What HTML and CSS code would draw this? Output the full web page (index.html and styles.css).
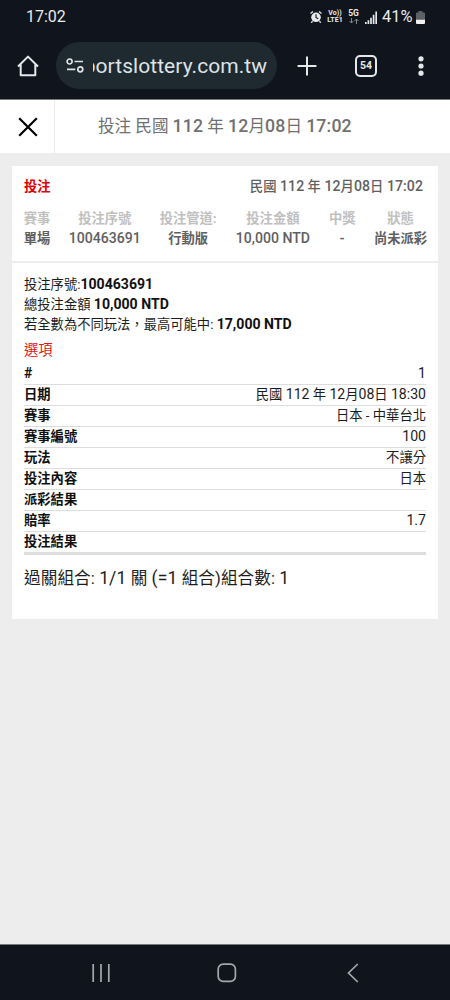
FILE: index.html
```html
<!DOCTYPE html>
<html lang="zh-Hant">
<head>
<meta charset="utf-8">
<meta name="viewport" content="width=device-width, initial-scale=1">
<title>投注</title>
<link rel="stylesheet" href="styles.css">
</head>
<body>
<div class="statusbar">
  <span class="clock">17:02</span>
  <div class="indicators">
    <svg class="alarm" viewBox="0 0 12 12" width="12" height="12"><circle cx="6" cy="6.3" r="4.8" fill="#e8eaeb"/><path d="M.5 2.6 3 .6M11.500 2.600 9 .6M2.600 10.200 1.200 11.700M9.400 10.200l1.400 1.500" stroke="#e8eaeb" stroke-width="1.300"/><path d="M6 3.300v3.200l2.200 1.200" fill="none" stroke="#10151d" stroke-width="1.100"/></svg>
    <span class="net volte"><span>Vo))</span><span>LTE1</span></span>
    <span class="net five"><span>5G</span><svg viewBox="0 0 10 6" width="10" height="6"><path d="M2.500 0v5M.5 3l2 2 2-2M7.500 6V1M5.500 3l2-2 2 2" fill="none" stroke="#858a90" stroke-width="1"/></svg></span>
    <svg class="signal" viewBox="0 0 12 13" width="12" height="13"><path d="M.8 13v-2M3.400 13V9.300M6 13V6.700M8.600 13V3.800M11.200 13V.5" stroke="#e8eaeb" stroke-width="1.700"/></svg>
    <span class="percent">41%</span>
    <svg class="battery" viewBox="0 0 9 13" width="9" height="13"><path d="M2.500 0h4v1.500H8Q9 1.500 9 2.500V8H0V2.500Q0 1.500 1 1.500h1.500z" fill="#5d6166"/><path d="M0 8.500h9V12q0 1-1 1H1q-1 0-1-1z" fill="#f1f1f1"/></svg>
  </div>
</div>
<div class="toolbar">
  <svg class="home" viewBox="0 0 22 22" width="22" height="22"><path d="M1 11.500 11 1.600 21 11.500M3.700 9.500V20.200H18.300V9.500" fill="none" stroke="#e5e7e9" stroke-width="2" stroke-linejoin="round"/></svg>
  <div class="address">
    <svg class="tune" viewBox="0 0 18 15" width="18" height="15"><g fill="none" stroke="#dfe3e6" stroke-width="1.700"><circle cx="3.600" cy="3.500" r="2.500"/><path d="M8.500 3.500H17M1 11.300H9.300"/><circle cx="14.300" cy="11.300" r="2.500"/></g></svg>
    <div class="url"><span>portslottery.com.tw</span></div>
  </div>
  <svg class="plus" viewBox="0 0 20 20" width="20" height="20"><path d="M10 .6v18.800M.6 10h18.800" stroke="#e5e7e9" stroke-width="2"/></svg>
  <span class="tabs">54</span>
  <svg class="more" viewBox="0 0 6 20" width="6" height="20"><g fill="#e5e7e9"><circle cx="3" cy="2.800" r="2.600"/><circle cx="3" cy="10" r="2.600"/><circle cx="3" cy="17.200" r="2.600"/></g></svg>
</div>
<header class="titlebar">
  <div class="close"><svg viewBox="0 0 20 20" width="20" height="20"><path d="M1.200 1.200l17.600 17.600M18.800 1.200 1.200 18.800" stroke="#000" stroke-width="2.200"/></svg></div>
  <h1 class="title">投注 民國 <b>112</b> 年 <b>12</b>月<b>08</b>日 <b>17:02</b></h1>
</header>
<main class="content">
  <section class="card">
    <div class="head">
      <div class="headline"><span class="kind">投注</span><span class="when">民國 <i>112</i> 年 <i>12</i>月<i>08</i>日 <i>17:02</i></span></div>
      <div class="summary">
        <div><span class="label">賽事</span><span>單場</span></div>
        <div><span class="label">投注序號</span><span class="num">100463691</span></div>
        <div><span class="label">投注管道:</span><span>行動版</span></div>
        <div><span class="label">投注金額</span><span class="num">10,000 NTD</span></div>
        <div><span class="label">中獎</span><span>-</span></div>
        <div><span class="label">狀態</span><span>尚未派彩</span></div>
      </div>
    </div>
    <div class="detail">
      <p>投注序號:<b>100463691</b></p>
      <p>總投注金額 <b>10,000 NTD</b></p>
      <p>若全數為不同玩法，最高可能中: <b>17,000 NTD</b></p>
      <h2 class="options">選項</h2>
      <dl class="rows">
        <div><dt><i>#</i></dt><dd><i>1</i></dd></div>
        <div><dt>日期</dt><dd>民國 <i>112</i> 年 <i>12</i>月<i>08</i>日 <i>18:30</i></dd></div>
        <div><dt>賽事</dt><dd>日本 - 中華台北</dd></div>
        <div><dt>賽事編號</dt><dd><i>100</i></dd></div>
        <div><dt>玩法</dt><dd>不讓分</dd></div>
        <div><dt>投注內容</dt><dd>日本</dd></div>
        <div><dt>派彩結果</dt><dd></dd></div>
        <div><dt>賠率</dt><dd><i>1.7</i></dd></div>
        <div><dt>投注結果</dt><dd></dd></div>
      </dl>
      <p class="combo">過關組合: <i>1/1</i> 關 <i>(=1</i> 組合)組合數: <i>1</i></p>
    </div>
  </section>
</main>
<nav class="navbar">
  <svg viewBox="0 0 18 20" width="18" height="20"><path d="M1.200 1v18M9 1v18M16.800 1v18" stroke="#a5a8ab" stroke-width="1.700"/></svg>
  <svg class="navhome" viewBox="0 0 20 20" width="20" height="20"><rect x="1.200" y="1.200" width="17.200" height="17.200" rx="5" fill="none" stroke="#a5a8ab" stroke-width="1.700"/></svg>
  <svg viewBox="0 0 12 20" width="12" height="20"><path d="M10.800 1 1.500 10l9.300 9" fill="none" stroke="#a5a8ab" stroke-width="1.700"/></svg>
</nav>
</body>
</html>
```
FILE: styles.css
```css
* { box-sizing: border-box; }
body {
  margin: 0;
  width: 450px;
  height: 1000px;
  display: flex;
  flex-direction: column;
  overflow: hidden;
  background: #ededed;
  font-family: Roboto, "Noto Sans CJK TC", sans-serif;
  font-size: 13.3px;
  color: #1c1c1c;
}
h1, h2, p, dl, dt, dd { margin: 0; font-weight: 400; }
svg { display: block; flex: none; }
/* Latin digits run slightly larger than the surrounding Chinese text */
i { font-style: normal; font-size: 1.06em; line-height: 1; }

.statusbar {
  height: 34px;
  flex: none;
  display: flex;
  justify-content: space-between;
  align-items: center;
  padding: 0 25px 0 26px;
  background: #10151d;
  color: #e8eaeb;
}
.clock { font-size: 16px; line-height: 20px; }
.indicators { display: flex; align-items: center; }
.net {
  display: flex;
  flex-direction: column;
  align-items: center;
  font-size: 7px;
  line-height: 7px;
  font-weight: 700;
}
.volte { width: 17px; margin-left: 5px; }
.five { width: 12px; margin-left: 4px; font-size: 8.5px; gap: 1px; }
.signal { margin-left: 5.5px; }
.percent { width: 33px; margin-left: 5px; font-size: 16.4px; line-height: 20px; white-space: nowrap; }
.battery { margin-left: 1px; }

.toolbar {
  height: 66px;
  flex: none;
  display: flex;
  align-items: center;
  padding: 0 0 2px 17px;
  background: #10151d;
  border-bottom: 1px solid #77797d;
}
.address {
  width: 221px;
  height: 47px;
  margin-left: 17px;
  padding-left: 10px;
  display: flex;
  align-items: center;
  border-radius: 24px;
  background: #1e2930;
}
.url {
  width: 174px;
  margin-left: 9px;
  display: flex;
  justify-content: flex-end;
  overflow: hidden;
  font-size: 21px;
  line-height: 28px;
  letter-spacing: .05px;
  color: #dfe3e6;
}
.plus { margin-left: 20px; }
.tabs {
  width: 22px;
  height: 22px;
  margin-left: 38px;
  border: 2px solid #e5e7e9;
  border-radius: 5px;
  color: #e5e7e9;
  font-size: 10.5px;
  font-weight: 700;
  line-height: 18px;
  text-align: center;
}
.more { margin-left: 41px; }

.titlebar {
  height: 53px;
  flex: none;
  display: flex;
  background: #fff;
}
.close {
  width: 55px;
  padding-left: 18px;
  display: flex;
  align-items: center;
  border-right: 1px solid #ececec;
}
.title {
  flex: 1;
  padding-left: 43px;
  font-size: 16.6px;
  line-height: 54px;
  color: #707070;
  white-space: nowrap;
}
.title b { font-weight: 500; font-size: 17.7px; line-height: 1; letter-spacing: .15px; }

.content { flex: 1; padding: 13px 12px 0; }
.card { height: 453px; background: #fff; }
.head {
  height: 97px;
  padding: 11px 11px 0 12px;
  border-bottom: 2px solid #ededed;
  color: #606060;
  font-weight: 700;
}
.headline { display: flex; justify-content: space-between; padding-right: 4px; line-height: 20px; }
.kind { color: #e00000; }
.when { font-weight: 500; letter-spacing: .08px; }
.summary {
  display: grid;
  grid-template-columns: 26px 72px 57px 75px 26px 53px;
  justify-content: space-between;
  margin-top: 12px;
}
.summary div {
  display: flex;
  flex-direction: column;
  align-items: center;
  line-height: 20px;
  white-space: nowrap;
}
.label { color: #c0c0c0; }
.num { font-weight: 500; font-size: 14.1px; line-height: 18px; }
.detail { padding: 12px 12px 0; line-height: 20px; }
.detail p { height: 20px; }
.detail b { font-weight: 700; font-size: 14.1px; line-height: 1; color: #111; }
.options { margin-top: 2px; font-size: 14.3px; line-height: 26px; color: #e01818; }
.rows { padding-top: 1px; }
.rows div {
  height: 21px;
  display: flex;
  justify-content: space-between;
  border-bottom: 1px solid #ddd;
}
.rows div:last-child { height: 23px; border-bottom: 3px solid #ddd; }
.rows dt { font-weight: 700; color: #111; }
.detail .combo { margin-top: 11px; height: 26px; font-size: 16.6px; line-height: 26px; letter-spacing: .1px; }

.navbar {
  height: 56px;
  flex: none;
  display: flex;
  justify-content: space-between;
  align-items: center;
  padding: 0 91px 0 92px;
  background: #10151d;
  border-top: 1px solid #77797d;
}
.navhome { margin-right: 4px; }
```
